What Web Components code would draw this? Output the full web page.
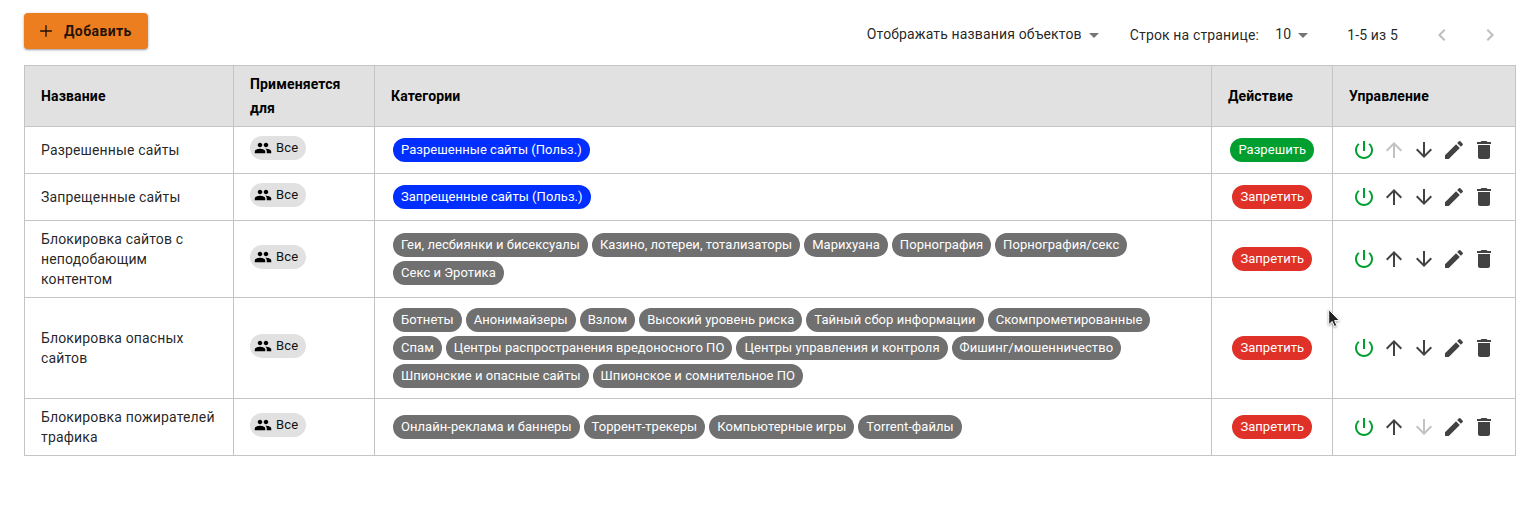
<!DOCTYPE html>
<html lang="ru">
<head>
<meta charset="utf-8">
<title>Правила</title>
<style>
body{margin:0;background:#fff;font-family:Roboto,"Liberation Sans",sans-serif;font-size:14px;line-height:20px;letter-spacing:.01071em;color:rgba(0,0,0,.87)}
</style>
</head>
<body>
<filter-page></filter-page>
<script>
const define = (name, css, html) => customElements.define(name, class extends HTMLElement {
  connectedCallback() {
    if (this.shadowRoot) return;
    const root = this.attachShadow({mode: 'open'});
    const view = typeof html === 'function' ? html(this) : html;
    root.innerHTML = `<style>*{box-sizing:border-box}${css}</style>${view}`;
  }
});

const ICONS = {
  add: 'M19 12.8h-6.2V19h-1.6v-6.2H5v-1.6h6.2V5h1.6v6.2H19z',
  people: 'M16 11c1.66 0 2.99-1.34 2.99-3S17.66 5 16 5c-1.66 0-3 1.34-3 3s1.34 3 3 3zm-8 0c1.66 0 2.99-1.34 2.99-3S9.66 5 8 5C6.34 5 5 6.34 5 8s1.34 3 3 3zm0 2c-2.33 0-7 1.17-7 3.5V19h14v-2.5c0-2.33-4.67-3.5-7-3.5zm8 0c-.29 0-.62.02-.97.05 1.16.84 1.97 1.97 1.97 3.45V19h6v-2.5c0-2.33-4.67-3.5-7-3.5z',
  power: 'M13 3h-2v10h2V3zm4.83 2.17l-1.42 1.42C17.99 7.86 19 9.81 19 12c0 3.87-3.13 7-7 7s-7-3.13-7-7c0-2.19 1.01-4.14 2.58-5.42L6.17 5.17C4.23 6.82 3 9.26 3 12c0 4.97 4.03 9 9 9s9-4.03 9-9c0-2.74-1.23-5.18-3.17-6.83z',
  up: 'M4 12l1.41 1.41L11 7.83V20h2V7.83l5.58 5.59L20 12l-8-8-8 8z',
  down: 'M20 12l-1.41-1.41L13 16.17V4h-2v12.17l-5.58-5.59L4 12l8 8 8-8z',
  edit: 'M3 17.25V21h3.75L17.81 9.94l-3.75-3.75L3 17.25zM20.71 7.04c.39-.39.39-1.02 0-1.41l-2.34-2.34a.9959.9959 0 0 0-1.41 0l-1.83 1.83 3.75 3.75 1.83-1.83z',
  trash: 'M6 19c0 1.1.9 2 2 2h8c1.1 0 2-.9 2-2V7H6v12zM19 4h-3.5l-1-1h-5l-1 1H5v2h14V4z',
  drop: 'M7 10l5 5 5-5z',
  left: 'M15.41 16.59L10.83 12l4.58-4.59L14 6l-6 6 6 6 1.41-1.41z',
  right: 'M8.59 16.59L13.17 12 8.59 7.41 10 6l6 6-6 6-1.41-1.41z'
};

define('ui-icon', `:host{display:block;flex:none;width:24px;height:24px}svg{display:block;width:100%;height:100%;fill:currentColor}`,
  el => `<svg viewBox="0 0 24 24"><path d="${ICONS[el.getAttribute('name')]}"/></svg>`);

define('ui-chip', `:host{display:inline-flex;align-items:center;height:24px;border-radius:12px;padding:0 8px;font-size:13px;letter-spacing:.04px;white-space:nowrap;color:#fff;background:#707070}
:host([tone=blue]){background:#002fff}:host([tone=green]){background:#009f2f}:host([tone=red]){background:#e03128}
:host([tone=green]),:host([tone=red]){padding:0 8px 0 8.6px}
:host([tone=light]){background:#e1e1e1;color:#111;padding-left:4px;letter-spacing:.15px}
ui-icon{width:18px;height:18px;margin-right:4px;color:#000}`,
  el => `${el.hasAttribute('icon') ? `<ui-icon name="${el.getAttribute('icon')}"></ui-icon>` : ''}<slot></slot>`);

define('add-button', `:host{display:block}
button{display:flex;align-items:center;width:124px;height:36px;border:0;border-radius:4px;padding:0 16px 0 12px;background:#ec7e20;color:rgba(0,0,0,.87);font:700 14px/24px Roboto,sans-serif;letter-spacing:.02857em;box-shadow:0 1px 3px rgba(0,0,0,.3),0 1px 1px rgba(0,0,0,.14);white-space:nowrap}
ui-icon{width:20px;height:20px;margin-right:8px}`, `<button><ui-icon name="add"></ui-icon><slot></slot></button>`);

define('ui-select', `:host{display:flex;align-items:center;font-size:14px;margin-top:-2px;white-space:nowrap}ui-icon{color:rgba(0,0,0,.54);margin-top:2px}`,
  `<slot></slot><ui-icon name="drop"></ui-icon>`);

define('table-pager', `:host{display:flex;align-items:center;height:24px;white-space:nowrap}
.rows{margin:0 16px 0 24px}.range{margin:0 32px}ui-icon{color:rgba(0,0,0,.26);margin-right:24px}ui-icon:last-child{margin-right:0}`,
  `<ui-select>Отображать названия объектов</ui-select><span class="rows">Строк на странице:</span><ui-select>10</ui-select><span class="range">1-5 из 5</span><ui-icon name="left"></ui-icon><ui-icon name="right"></ui-icon>`);

define('page-toolbar', `:host{display:flex;justify-content:space-between;align-items:flex-start;height:52px}table-pager{margin:10px 14px 0 0}`,
  `<add-button>Добавить</add-button><table-pager></table-pager>`);

const GRID = `:host{display:grid;grid-template-columns:208px 141px 837px 121px 183px;border-bottom:1px solid #c4c4c4}
.cell{display:flex;align-items:center;padding:0 16px}.cell+.cell{border-left:1px solid #c4c4c4}`;

define('table-head', GRID + `:host{height:61px;background:#e1e1e1;color:#000;font-weight:700;line-height:24px}`,
  ['Название', 'Применяется для', 'Категории', 'Действие', 'Управление'].map(t => `<div class="cell">${t}</div>`).join(''));

define('row-actions', `:host{display:flex;gap:6px;color:#424242}.power{color:#009f2f}.off{color:#c2c2c2}`,
  el => `<ui-icon class="power" name="power"></ui-icon>` + ['up', 'down', 'edit', 'trash'].map(n =>
    `<ui-icon name="${n}" class="${el.getAttribute('disabled') === n ? 'off' : ''}"></ui-icon>`).join(''));

define('rule-row', GRID + `.cats{display:flex;flex-wrap:wrap;align-content:center;gap:4px;padding:0 18px}
.who ui-chip{margin-bottom:4px}.act{justify-content:center;padding:0}.ctl{padding:0 0 0 19px}`,
  el => {
    const r = RULES[+el.getAttribute('index')];
    return `<div class="cell">${r.name}</div>
<div class="cell who"><ui-chip tone="light" icon="people">Все</ui-chip></div>
<div class="cell cats">${r.cats.map(c => `<ui-chip tone="${r.own ? 'blue' : 'gray'}">${c}</ui-chip>`).join('')}</div>
<div class="cell act"><ui-chip tone="${r.allow ? 'green' : 'red'}">${r.allow ? 'Разрешить' : 'Запретить'}</ui-chip></div>
<div class="cell ctl"><row-actions disabled="${r.off || ''}"></row-actions></div>`;
  });

const RULES = [
  {name: 'Разрешенные сайты', h: 47, own: true, allow: true, off: 'up', cats: ['Разрешенные сайты (Польз.)']},
  {name: 'Запрещенные сайты', h: 47, own: true, cats: ['Запрещенные сайты (Польз.)']},
  {name: 'Блокировка сайтов с неподобающим контентом', h: 77, cats: ['Геи, лесбиянки и бисексуалы', 'Казино, лотереи, тотализаторы', 'Марихуана', 'Порнография', 'Порнография/секс', 'Секс и Эротика']},
  {name: 'Блокировка опасных сайтов', h: 101, cats: ['Ботнеты', 'Анонимайзеры', 'Взлом', 'Высокий уровень риска', 'Тайный сбор информации', 'Скомпрометированные', 'Спам', 'Центры распространения вредоносного ПО', 'Центры управления и контроля', 'Фишинг/мошенничество', 'Шпионские и опасные сайты', 'Шпионское и сомнительное ПО']},
  {name: 'Блокировка пожирателей трафика', h: 57, off: 'down', cats: ['Онлайн-реклама и баннеры', 'Торрент-трекеры', 'Компьютерные игры', 'Torrent-файлы']}
];

define('rules-table', `:host{display:block;border:1px solid #c4c4c4;border-bottom:0}`,
  () => `<table-head></table-head>` + RULES.map((r, i) => `<rule-row index="${i}" style="height:${r.h}px"></rule-row>`).join(''));

define('mouse-pointer', `:host{position:absolute;left:1326px;top:307px;width:16px;height:22px}svg{display:block;filter:drop-shadow(0 1px 1px rgba(0,0,0,.35))}`,
  `<svg width="16" height="22" viewBox="0 0 16 22"><path d="M2.7 2.5v15.2l3.5-3.2 2.2 5 2.4-1-2.2-4.9h4.8z" fill="#222" stroke="#fff" stroke-width="1"/></svg>`);

define('filter-page', `:host{display:block;position:relative;width:1527px;height:518px;padding:13px 11px 0 24px;box-sizing:border-box;overflow:hidden}`,
  `<page-toolbar></page-toolbar><rules-table></rules-table><mouse-pointer></mouse-pointer>`);
</script>
</body>
</html>
